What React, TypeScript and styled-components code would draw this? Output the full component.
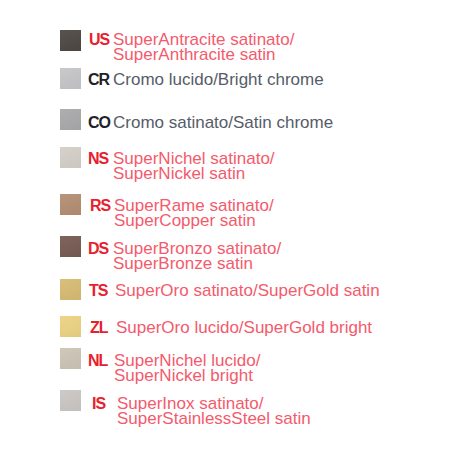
import React from 'react';
import styled, { createGlobalStyle } from 'styled-components';

const GlobalStyle = createGlobalStyle`
  html, body {
    margin: 0;
    padding: 0;
    background: #ffffff;
  }
  body {
    font-family: "Liberation Sans", Arial, sans-serif;
  }
`;

type Finish = {
  code: string;
  swatch: string;
  lines: string[];
  accent: boolean;
  pitch: number; // distance to the next row
  shift: number; // text offset below the swatch top
  codeAt: number; // left edge of the code, from the swatch's right edge
  textAt: number; // left edge of the description, from the code
};

const finishes: Finish[] = [
  { code: 'US', swatch: '#4d4843', lines: ['SuperAntracite satinato/', 'SuperAnthracite satin'], accent: true, pitch: 38, shift: 2, codeAt: 8, textAt: 24 },
  { code: 'CR', swatch: '#c5c5c7', lines: ['Cromo lucido/Bright chrome'], accent: false, pitch: 41, shift: 4, codeAt: 7, textAt: 25 },
  { code: 'CO', swatch: '#a9a9ab', lines: ['Cromo satinato/Satin chrome'], accent: false, pitch: 38, shift: 6, codeAt: 7, textAt: 25 },
  { code: 'NS', swatch: '#d3cfc7', lines: ['SuperNichel satinato/', 'SuperNickel satin'], accent: true, pitch: 47, shift: 4, codeAt: 7, textAt: 25 },
  { code: 'RS', swatch: '#b38e72', lines: ['SuperRame satinato/', 'SuperCopper satin'], accent: true, pitch: 42, shift: 4, codeAt: 9, textAt: 24 },
  { code: 'DS', swatch: '#765b52', lines: ['SuperBronzo satinato/', 'SuperBronze satin'], accent: true, pitch: 43, shift: 5, codeAt: 7, textAt: 25 },
  { code: 'TS', swatch: '#d7bb72', lines: ['SuperOro satinato/SuperGold satin'], accent: true, pitch: 37, shift: 4, codeAt: 8, textAt: 26 },
  { code: 'ZL', swatch: '#ebd282', lines: ['SuperOro lucido/SuperGold bright'], accent: true, pitch: 32, shift: 4, codeAt: 9, textAt: 26 },
  { code: 'NL', swatch: '#cbc4b6', lines: ['SuperNichel lucido/', 'SuperNickel bright'], accent: true, pitch: 42, shift: 5, codeAt: 7, textAt: 26 },
  { code: 'IS', swatch: '#cac6c4', lines: ['SuperInox satinato/', 'SuperStainlessSteel satin'], accent: true, pitch: 40, shift: 6, codeAt: 11, textAt: 25 },
];

const Legend = styled.div`
  display: flex;
  flex-direction: column;
  padding: 30px 0 0 60px;
`;

const Row = styled.div<{ $pitch: number }>`
  display: flex;
  align-items: flex-start;
  height: ${(p) => p.$pitch}px;
`;

const Swatch = styled.div<{ $color: string }>`
  width: 21px;
  height: 21px;
  flex-shrink: 0;
  background: ${(p) => p.$color};
  background-image: linear-gradient(
    160deg,
    rgba(255, 255, 255, 0.06),
    rgba(0, 0, 0, 0.04)
  );
`;

const Label = styled.div<{ $shift: number; $at: number }>`
  display: flex;
  align-items: baseline;
  margin-left: ${(p) => p.$at}px;
  padding-top: ${(p) => p.$shift}px;
  font-size: 17px;
  line-height: 15px;
`;

const Code = styled.span<{ $accent: boolean; $width: number }>`
  flex-shrink: 0;
  width: ${(p) => p.$width}px;
  font-size: 16px;
  font-weight: 700;
  letter-spacing: -1px;
  color: ${(p) => (p.$accent ? '#e8202e' : '#1f2226')};
`;

const Text = styled.div<{ $accent: boolean }>`
  display: flex;
  flex-direction: column;
  color: ${(p) => (p.$accent ? '#f45a6c' : '#565c68')};
  white-space: nowrap;
`;

const App = () => {
  return (
    <>
      <GlobalStyle />
      <Legend>
        {finishes.map((f) => (
          <Row key={f.code} $pitch={f.pitch}>
            <Swatch $color={f.swatch} />
            <Label $shift={f.shift} $at={f.codeAt}>
              <Code $accent={f.accent} $width={f.textAt}>
                {f.code}
              </Code>
              <Text $accent={f.accent}>
                {f.lines.map((line) => (
                  <span key={line}>{line}</span>
                ))}
              </Text>
            </Label>
          </Row>
        ))}
      </Legend>
    </>
  );
};

export default App;
